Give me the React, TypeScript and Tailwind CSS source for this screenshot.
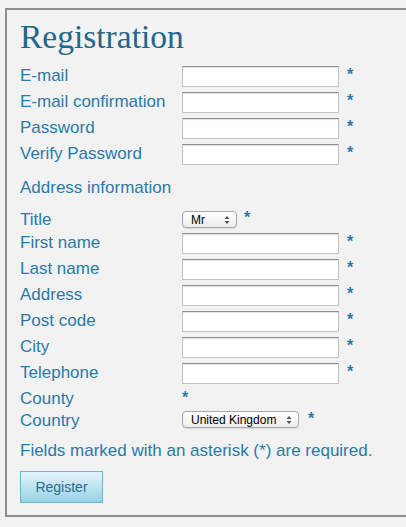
import React from "react";

const labelCls = "w-[162px] shrink-0 pt-[2px] text-[17px] leading-[20px] text-[#2b7aa7]";
const starCls = "text-[16px] leading-[20px] font-bold text-[#2b7aa7]";

function TextRow({ label, type = "text" }: { label: string; type?: string }) {
  return (
    <div className="flex h-[26px] items-start">
      <div className={labelCls}>{label}</div>
      <input
        type={type}
        className="mt-[2px] h-[21px] w-[157px] border border-[#c4c4c4] border-t-[#8e8e8e] bg-white shadow-[inset_0_1px_1px_rgba(0,0,0,0.12)] outline-none"
      />
      <span className={`${starCls} ml-[8px] pt-[1px]`}>*</span>
    </div>
  );
}

function FakeSelect({ value, width }: { value: string; width: string }) {
  return (
    <div
      className={`${width} flex h-[17px] items-center justify-between rounded-[4px] border border-[#a8a8a8] bg-gradient-to-b from-white to-[#ededed] pl-[8px] pr-[6px] text-[12px] leading-none text-black shadow-[0_1px_1px_rgba(0,0,0,0.1)]`}
    >
      <span>{value}</span>
      <svg width="6" height="10" viewBox="0 0 6 10" className="text-[#555]">
        <path d="M0.5 4 L3 1 L5.5 4 Z" fill="currentColor" />
        <path d="M0.5 6 L3 9 L5.5 6 Z" fill="currentColor" />
      </svg>
    </div>
  );
}

export default function App() {
  return (
    <div
      className="min-h-screen overflow-hidden bg-[#f2f2f2] pt-[8px] pl-[5px]"
      style={{ fontFamily: '"Liberation Sans", Arial, sans-serif' }}
    >
      <div className="h-[509px] w-[430px] border-2 border-[#8f8f8f] pl-[13px] pt-[7px]">
        {/* Заголовок */}
        <h1
          className="text-[33.5px] leading-[40px] text-[#23668b]"
          style={{ fontFamily: '"Liberation Serif", "Times New Roman", serif' }}
        >
          Registration
        </h1>

        <div className="mt-[7px]">
          <TextRow label="E-mail" />
          <TextRow label="E-mail confirmation" />
          <TextRow label="Password" type="password" />
          <TextRow label="Verify Password" type="password" />
        </div>

        <div className="mt-[10px] text-[17px] leading-[20px] text-[#2b7aa7]">Address information</div>

        <div className="mt-[10px]">
          <div className="flex h-[23px] items-start">
            <div className={labelCls}>Title</div>
            <div className="mt-[3px]">
              <FakeSelect value="Mr" width="w-[55px]" />
            </div>
            <span className={`${starCls} ml-[7px] pt-[0px]`}>*</span>
          </div>
          <TextRow label="First name" />
          <TextRow label="Last name" />
          <TextRow label="Address" />
          <TextRow label="Post code" />
          <TextRow label="City" />
          <TextRow label="Telephone" />
          <div className="flex h-[22px] items-start">
            <div className={labelCls}>County</div>
            <span className={`${starCls} pt-[1px]`}>*</span>
          </div>
          <div className="flex h-[22px] items-start">
            <div className={labelCls}>Country</div>
            <div className="mt-[2px]">
              <FakeSelect value="United Kingdom" width="w-[117px]" />
            </div>
            <span className={`${starCls} ml-[9px] pt-[0px]`}>*</span>
          </div>
        </div>

        <p className="mt-[10px] text-[17px] leading-[20px] text-[#2b7aa7]">
          Fields marked with an asterisk (*) are required.
        </p>

        <button className="mt-[10px] h-[32px] w-[83px] border border-[#74b6cf] bg-gradient-to-b from-[#e2f4fa] to-[#98d2e6] text-[14px] text-[#2a6b90]">
          Register
        </button>
      </div>
    </div>
  );
}
